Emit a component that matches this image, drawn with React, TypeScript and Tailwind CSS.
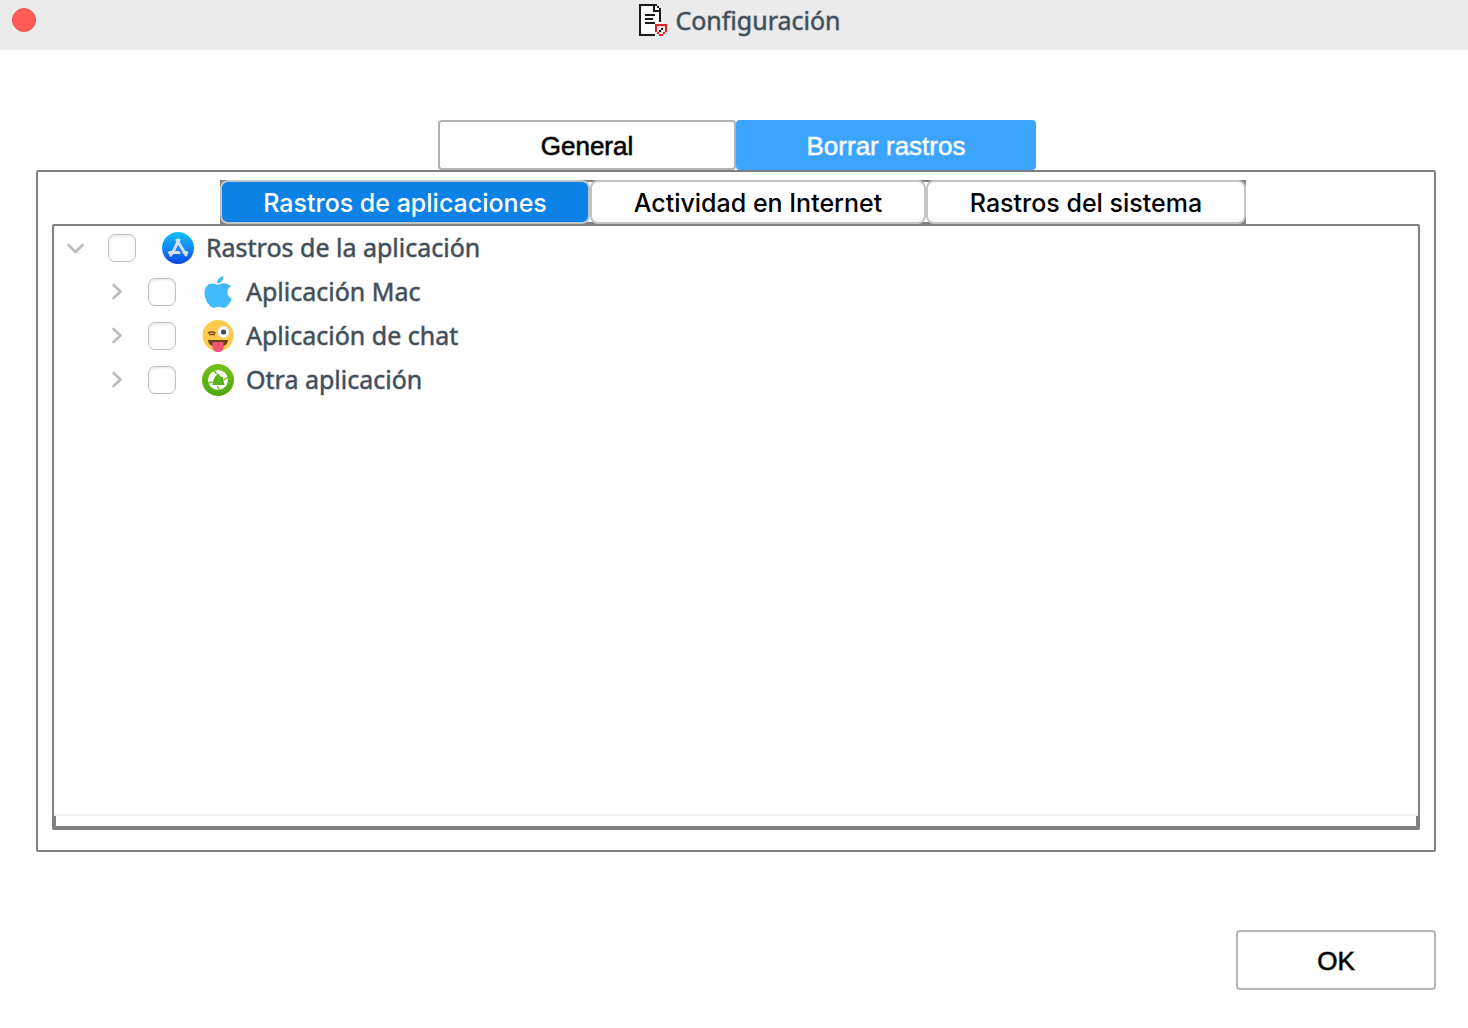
import React, { useState } from 'react';

interface TreeNode {
  id: string;
  label: string;
  icon: React.ReactNode;
}

const DocumentIcon = () => (
  <svg width="28" height="32" viewBox="0 0 14 16" shapeRendering="crispEdges" aria-hidden="true">
    <path d="M0 0h8l3 3v8h-3v5H0z" fill="#fff" />
    <path d="M0 0h9v1H1v14h7v1H0z" fill="#1a1a1a" />
    <path d="M7 1h1v2h2v1H7zM9 1h1v1H9zM10 2h1v7h-1z" fill="#1a1a1a" />
    <path d="M3 5h5v1H3zM3 7h4v1H3zM3 9h5v1H3z" fill="#1a1a1a" />
    <path d="M9 11h4v2h-1v2h-2v-2H9z" fill="#e4e4e4" />
    <path d="M8 10h6v4h-1v-3H9v3H8zM9 14h1v1H9zM12 14h1v1h-1zM10 15h2v1h-2z" fill="#e8202a" />
    <path d="M11 12h1v1h-1zM10 13h1v1h-1z" fill="#1a1a1a" />
  </svg>
);

const StoreIcon = () => (
  <svg width="32" height="32" viewBox="0 0 32 32" aria-hidden="true">
    <defs>
      <linearGradient id="store-bg" x1="0" y1="0" x2="0" y2="1">
        <stop offset="0" stopColor="#12c0fb" />
        <stop offset="0.5" stopColor="#1489f5" />
        <stop offset="1" stopColor="#0b43e0" />
      </linearGradient>
    </defs>
    <circle cx="16" cy="16" r="16" fill="url(#store-bg)" />
    <g stroke="#d3e0f0" strokeWidth="3" strokeLinecap="round" fill="none">
      <path d="M17 8 11.200 19.400M15 8 24 23M7.500 20.500h9.500M22 20.500h2.800M9.500 22l-.8 1.200" />
    </g>
  </svg>
);

const AppleIcon = () => (
  <svg width="32" height="32" viewBox="0 0 32 32" aria-hidden="true">
    <path
      d="M21.400 0c.3 2-.5 3.800-1.700 5.200-1.200 1.300-2.700 2.200-4.400 2.100-.2-1.900.6-3.700 1.700-4.900C18.200 1.100 20 .2 21.400 0zM28.700 10.400c-2.300 1.400-3.300 3.500-3.300 5.800 0 2.700 1.600 5.200 4.300 6.200-.6 2.100-1.700 4.200-3.100 6.200-1.200 1.800-2.600 3.200-4.500 3.200-2 0-2.900-1.100-5.300-1.100s-3.400 1.100-5.200 1.100c-2 0-3.700-1.700-5.100-3.700-2.600-3.700-4.500-8.800-3.900-12.900.7-4.300 3.900-7.600 7.600-7.600 2.100 0 4.200 1.200 5.500 1.200 1.200 0 3.500-1.600 6.100-1.500 2.500 0 5.300 1 6.900 3.100z"
      fill="#42b9fb"
    />
  </svg>
);

const WinkIcon = () => (
  <svg width="32" height="32" viewBox="0 0 32 32" aria-hidden="true">
    <circle cx="16" cy="15.500" r="15.500" fill="#ffca4a" />
    <path d="M6 20h20c-.4 4-3 7-10 7S6.400 24 6 20z" fill="#6b3f18" />
    <path d="M10.500 22h11v5c0 3.200-2.200 5-5.500 5s-5.500-1.800-5.500-5z" fill="#ee5673" />
    <path d="M16 23v5" stroke="#d9475f" strokeWidth="1" />
    <circle cx="21.500" cy="12" r="5.700" fill="#fff" stroke="#d9d9d9" strokeWidth="0.800" />
    <circle cx="21.500" cy="12" r="2.600" fill="#3f4d58" />
    <path d="M6 13c2-1.200 5-1.200 7.500 0M7 14.500h6" stroke="#7a4d1c" strokeWidth="1.600" fill="none" />
  </svg>
);

const OtherIcon = () => (
  <svg width="32" height="32" viewBox="0 0 32 32" aria-hidden="true">
    <defs>
      <linearGradient id="other-bg" x1="0" y1="0" x2="0" y2="1">
        <stop offset="0" stopColor="#76c01a" />
        <stop offset="1" stopColor="#50a80c" />
      </linearGradient>
    </defs>
    <circle cx="16" cy="16" r="16" fill="url(#other-bg)" />
    <circle cx="16" cy="16" r="10" fill="#fff" />
    <path d="M16 9.500l3 3.500h2l.5 3.500 1 4.500h-12l.8-4.500 1.700-3.500z" fill="#5bb012" />
    <path d="M12 6.500l2.500 3.500M25.500 13.500 21.500 16M17 26l-1.500-4M6.500 19l4-1" stroke="#6cb918" strokeWidth="1.400" fill="none" />
  </svg>
);

const ROOT: TreeNode = { id: 'root', label: 'Rastros de la aplicación', icon: <StoreIcon /> };

const CHILDREN: TreeNode[] = [
  { id: 'mac', label: 'Aplicación Mac', icon: <AppleIcon /> },
  { id: 'chat', label: 'Aplicación de chat', icon: <WinkIcon /> },
  { id: 'other', label: 'Otra aplicación', icon: <OtherIcon /> },
];

interface TreeRowProps {
  node: TreeNode;
  open: boolean;
  nested?: boolean;
  onToggle: () => void;
}

const TreeRow: React.FC<TreeRowProps> = ({ node, open, nested, onToggle }) => (
  <div className={nested ? 'flex h-11 items-center pl-[50px]' : 'flex h-11 items-center pl-[10px]'}>
    <button
      type="button"
      aria-label={`Desplegar ${node.label}`}
      aria-expanded={open}
      onClick={onToggle}
      className="flex size-6 items-center justify-center"
    >
      <svg width="18" height="18" viewBox="0 0 18 18" fill="none" stroke="#bdbdbd" strokeWidth="2.600" strokeLinecap="round" strokeLinejoin="round">
        {open ? <path d="M1.500 6 8.500 13l7-7" /> : <path d="M6.500 2l7 6.500-7 6.500" />}
      </svg>
    </button>
    <input
      type="checkbox"
      id={`node-${node.id}`}
      className="ml-5 size-7 shrink-0 appearance-none rounded-[7px] border border-[#c2c2c2] bg-white shadow-[inset_0_1px_3px_rgba(0,0,0,0.12)] checked:bg-[#0d82e6]"
    />
    <label
      htmlFor={`node-${node.id}`}
      className="ml-[26px] flex items-center gap-3 whitespace-nowrap [-webkit-text-stroke:1px_rgba(65,78,89,0.5)]"
    >
      {node.icon}
      {node.label}
    </label>
  </div>
);

const MAIN_TABS = ['General', 'Borrar rastros'];

const SUB_TABS = [
  { label: 'Rastros de aplicaciones', width: 'w-[370px]' },
  { label: 'Actividad en Internet', width: 'w-[336px]' },
  { label: 'Rastros del sistema', width: 'w-[320px]' },
];

export default function App() {
  const [mainTab, setMainTab] = useState(1);
  const [subTab, setSubTab] = useState(0);
  const [expanded, setExpanded] = useState<Record<string, boolean>>({ root: true });

  const toggle = (id: string) => setExpanded((prev) => ({ ...prev, [id]: !prev[id] }));

  return (
    <div className="flex min-h-screen flex-col bg-white font-['Noto_Sans',sans-serif] text-[25px] text-[#414e59]">
      <header className="grid h-[50px] grid-cols-[1fr_auto_1fr] items-center bg-[#ebebeb] pb-[10px] pl-3">
        <button type="button" aria-label="Cerrar" className="size-6 rounded-full border border-[#ee5550] bg-[#ff5b57]" />
        <div className="flex items-center gap-2">
          <DocumentIcon />
          <h1 className="leading-8 [-webkit-text-stroke:1px_rgba(65,78,89,0.5)]">Configuración</h1>
        </div>
      </header>

      <main className="flex flex-1 flex-col pt-[70px] pr-8 pb-[38px] pl-9">
        <div role="tablist" className="flex justify-center pl-[2px] font-['Liberation_Sans',Arial,sans-serif] text-[26px]">
          {MAIN_TABS.map((label, i) => (
            <button
              key={label}
              type="button"
              role="tab"
              aria-selected={mainTab === i}
              onClick={() => setMainTab(i)}
              className={
                mainTab === i
                  ? 'h-[50px] w-[300px] rounded-[4px] bg-[#3aa4ff] pt-[2px] text-white [-webkit-text-stroke:1px_rgba(255,255,255,0.5)]'
                  : 'h-[50px] w-[298px] rounded-[4px] border-2 border-[#b2b2b2] bg-white pt-[2px] text-black [-webkit-text-stroke:1px_rgba(0,0,0,0.6)]'
              }
            >
              {label}
            </button>
          ))}
        </div>

        <section className="flex flex-1 flex-col rounded-[2px] border-2 border-[#808080] px-[14px] pt-2 pb-5">
          <div className="flex justify-center pr-[6px]">
            <div role="tablist" className="flex font-['Inter',sans-serif] text-[25px] font-medium shadow-[inset_0_0_0_2px_#808080]">
              {SUB_TABS.map((tab, i) => (
                <button
                  key={tab.label}
                  type="button"
                  role="tab"
                  aria-selected={subTab === i}
                  onClick={() => setSubTab(i)}
                  className={`${tab.width} h-11 rounded-[8px] border-2 border-[#c0c4c7] pt-[3px] ${
                    subTab === i ? 'bg-[#0d82e6] text-white' : 'bg-white text-black'
                  }`}
                >
                  {tab.label}
                </button>
              ))}
            </div>
          </div>

          <div className="flex flex-1 flex-col rounded-[2px] border-2 border-[#808080]">
            <div className="flex-1 border-b-2 border-[#f3f3f3]">
              <TreeRow node={ROOT} open={!!expanded.root} onToggle={() => toggle('root')} />
              {expanded.root &&
                CHILDREN.map((node) => (
                  <TreeRow key={node.id} node={node} open={!!expanded[node.id]} nested onToggle={() => toggle(node.id)} />
                ))}
            </div>
            <div className="h-3 border-x-2 border-b-2 border-[#808080]" />
          </div>
        </section>

        <button
          type="button"
          className="mt-[78px] h-[60px] w-[200px] self-end rounded-[4px] border-2 border-[#b5b5b5] bg-white pt-[2px] font-['Liberation_Sans',Arial,sans-serif] text-[26px] text-black [-webkit-text-stroke:1px_rgba(0,0,0,0.6)]"
        >
          OK
        </button>
      </main>
    </div>
  );
}
